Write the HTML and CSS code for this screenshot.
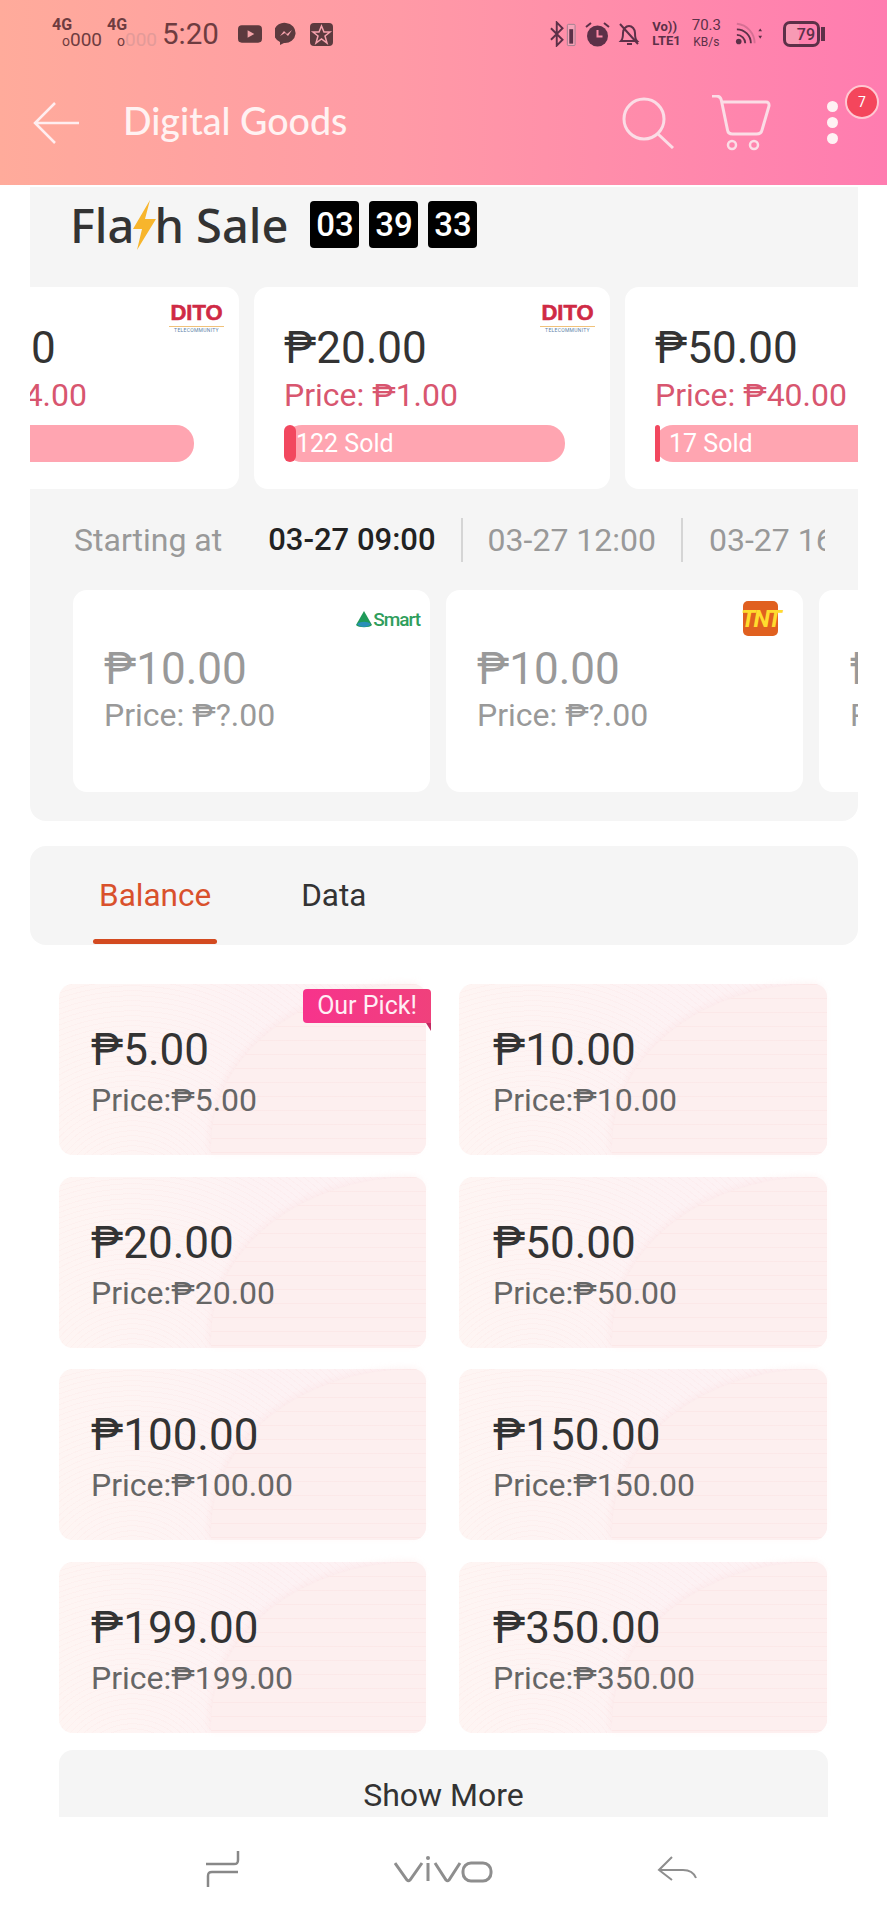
FILE: index.html

```html
<!DOCTYPE html>
<html lang="en">
<head>
    <meta charset="UTF-8">
    <meta name="viewport" content="width=device-width, initial-scale=1.0">
    <title>Digital Goods</title>
    <link rel="stylesheet" href="styles.css">
</head>
<body>
    <header class="header">
        <div class="status">
            <div class="status-side">
                <span class="sim"><b>4G</b><i><u>o</u>000</i></span>
                <span class="sim"><b>4G</b><i class="faint"><u>o</u>000</i></span>
                <span class="clock">5:20</span>
                <svg class="st-icon" width="24" height="18" viewBox="0 0 25 18"><rect width="25" height="18" rx="4" fill="#5c3a3e"/><path d="M10 5l7 4-7 4z" fill="#f3a3a8"/></svg>
                <svg class="st-icon" width="22" height="24" viewBox="0 0 22 24"><path d="M11 1a10.500 10 0 0 0-6 19v3l4-2a10.500 10 0 1 0 2-20z" fill="#5c3a3e"/><path d="M5 14l4-5 3 3 5-4-4 6-3-3z" fill="#f7a3ae"/></svg>
                <svg class="st-icon" width="23" height="23" viewBox="0 0 23 23"><rect width="23" height="23" rx="4" fill="#5c3a3e"/><path d="M11.500 3l2.500 6h6l-5 4 2 7-5.500-4-5.500 4 2-7-5-4h6z" fill="none" stroke="#f7a3ae" stroke-width="1.500"/></svg>
            </div>
            <div class="status-side">
                <svg class="st-icon tight" width="27" height="26" viewBox="0 0 28 26"><path d="M1 7l12 12-6 6V1l6 6L1 19" fill="none" stroke="#5c3048" stroke-width="2"/><rect x="18" y="3" width="8" height="22" rx="1" fill="#f7a3b8" stroke="#a08090"/><rect x="20" y="8" width="4" height="15" fill="#5c3048"/></svg>
                <svg class="st-icon tight" width="25" height="25" viewBox="0 0 25 25"><circle cx="12.500" cy="14" r="10.500" fill="#5c3048"/><path d="M12.500 8v6.500h5" fill="none" stroke="#ff8aa8" stroke-width="2"/><path d="M1 5l5-4M24 5l-5-4" stroke="#5c3048" stroke-width="2"/></svg>
                <svg class="st-icon bell" width="22" height="25" viewBox="0 0 22 25"><path d="M3 19c2-2 2-5 2-8 0-4 3-7 6-7s6 3 6 7c0 3 0 6 2 8zM9 22h5M2 2l18 20" fill="none" stroke="#5c3048" stroke-width="2"/></svg>
                <span class="volte"><b>Vo))</b><b>LTE1</b></span>
                <span class="speed"><span>70.3</span><small>KB/s</small></span>
                <svg class="st-icon wifi" width="28" height="24" viewBox="0 0 30 24"><g fill="none" stroke="#5c3048" stroke-width="2"><path d="M2 13a9 9 0 0 1 9 9" /><path d="M2 7a15 15 0 0 1 15 15" /><path d="M2 1a21 21 0 0 1 19 21" opacity=".25"/></g><circle cx="4" cy="20" r="3" fill="#5c3048"/><path d="M25 9l2-3 2 3zM25 14l2 3 2-3z" fill="#5c3048"/></svg>
                <span class="battery"><span class="battery-num">79</span></span>
            </div>
        </div>
        <div class="appbar">
            <svg class="back" width="48" height="42" viewBox="0 0 48 42"><path d="M46 21H2M22 1L2 21l20 20" fill="none" stroke="#ffeef0" stroke-width="2.500"/></svg>
            <h1 class="appbar-title">Digital Goods</h1>
            <svg class="search" width="52" height="52" viewBox="0 0 52 52"><circle cx="22" cy="22" r="20" fill="none" stroke="#fbdde6" stroke-width="3"/><path d="M36 37l15 14" stroke="#fbdde6" stroke-width="3"/></svg>
            <svg class="cart" width="60" height="56" viewBox="0 0 60 56"><path d="M1 1h4c3 0 5 2 5.500 5l6 29c.5 3 2 4 5 4h24c3 0 5-1.500 5.500-4L58 11c.3-3-1-4-3-4H10" fill="none" stroke="#fbdde6" stroke-width="3"/><circle cx="21" cy="50" r="4" fill="none" stroke="#fbdde6" stroke-width="2.500"/><circle cx="43" cy="50" r="4" fill="none" stroke="#fbdde6" stroke-width="2.500"/></svg>
            <div class="more">
                <i></i><i></i><i></i>
                <span class="badge">7</span>
            </div>
        </div>
    </header>

    <main class="page">
        <section class="flash">
            <div class="flash-head">
                <h2 class="flash-title">Fla<svg class="bolt" width="26" height="52" viewBox="0 0 26 52"><path d="M19 1L2 30h9L6 51l19-31H14z" fill="#f7b52c"/></svg>h Sale</h2>
                <span class="tick">03</span>
                <span class="tick">39</span>
                <span class="tick">33</span>
            </div>

            <div class="deals">
                <div class="deal">
                    <span class="logo-dito"><b>DITO</b><small>TELECOMMUNITY</small></span>
                    <div class="amount">₱10.00</div>
                    <div class="price-red">Price: ₱4.00</div>
                    <div class="bar"></div>
                </div>
                <div class="deal">
                    <span class="logo-dito"><b>DITO</b><small>TELECOMMUNITY</small></span>
                    <div class="amount">₱20.00</div>
                    <div class="price-red">Price: ₱1.00</div>
                    <div class="bar"><span class="bar-fill"></span>122 Sold</div>
                </div>
                <div class="deal">
                    <div class="amount">₱50.00</div>
                    <div class="price-red">Price: ₱40.00</div>
                    <div class="bar"><span class="bar-fill thin"></span>17 Sold</div>
                </div>
            </div>

            <div class="upcoming">
                <div class="times">
                    <span class="times-label">Starting at</span>
                    <span class="time active">03-27 09:00</span>
                    <span class="time">03-27 12:00</span>
                    <span class="time">03-27 16:00</span>
                </div>
                <div class="soon">
                    <div class="soon-card">
                        <span class="logo-smart"><svg width="16" height="17" viewBox="0 0 16 17"><path d="M8 0l8 14c-2 3-14 3-16 0z" fill="#1f9a58"/><path d="M1 13c4-3 10-3 14 0-3 4-11 4-14 0z" fill="#2a8fb8"/></svg>Smart</span>
                        <div class="amount grey">₱10.00</div>
                        <div class="price-grey">Price: ₱?.00</div>
                    </div>
                    <div class="soon-card">
                        <span class="logo-tnt">TNT</span>
                        <div class="amount grey">₱10.00</div>
                        <div class="price-grey">Price: ₱?.00</div>
                    </div>
                    <div class="soon-card">
                        <div class="amount grey">₱10.00</div>
                        <div class="price-grey">Price: ₱?.00</div>
                    </div>
                </div>
            </div>
        </section>

        <nav class="tabs">
            <span class="tab active">Balance</span>
            <span class="tab">Data</span>
        </nav>

        <section class="grid">
            <div class="load">
                <span class="pick">Our Pick!</span>
                <div class="amount">₱5.00</div>
                <div class="price">Price:₱5.00</div>
            </div>
            <div class="load">
                <div class="amount">₱10.00</div>
                <div class="price">Price:₱10.00</div>
            </div>
            <div class="load">
                <div class="amount">₱20.00</div>
                <div class="price">Price:₱20.00</div>
            </div>
            <div class="load">
                <div class="amount">₱50.00</div>
                <div class="price">Price:₱50.00</div>
            </div>
            <div class="load">
                <div class="amount">₱100.00</div>
                <div class="price">Price:₱100.00</div>
            </div>
            <div class="load">
                <div class="amount">₱150.00</div>
                <div class="price">Price:₱150.00</div>
            </div>
            <div class="load">
                <div class="amount">₱199.00</div>
                <div class="price">Price:₱199.00</div>
            </div>
            <div class="load">
                <div class="amount">₱350.00</div>
                <div class="price">Price:₱350.00</div>
            </div>
        </section>

        <div class="show-more">Show More</div>
    </main>

    <footer class="navbar">
        <svg class="nav-recent" width="34" height="38" viewBox="0 0 34 38"><path d="M32 1v9c0 3-1 4-4 4H0M32 22H6c-3 0-4 1-4 4v11" fill="none" stroke="#888" stroke-width="2.500"/></svg>
        <svg class="nav-home" width="100" height="27" viewBox="0 0 100 27"><path d="M1 7l12 17q1.500 1.500 3 0L28 7M34 7v18M41 7l11 17q1.500 1.500 3 0L66 7" fill="none" stroke="#8e8e8e" stroke-width="3"/><circle cx="34" cy="2" r="2" fill="#8e8e8e"/><rect x="69" y="7" width="28" height="18" rx="8" fill="none" stroke="#8e8e8e" stroke-width="3"/></svg>
        <svg class="nav-back" width="40" height="26" viewBox="0 0 40 26"><path d="M15 1L2 14l13 10M2 14h24c7 0 11 3 13 8" fill="none" stroke="#8e8e8e" stroke-width="2"/></svg>
    </footer>
</body>
</html>
```

FILE: styles.css

```css
body {
    margin: 0;
    width: 887px;
    height: 1920px;
    overflow: hidden;
    background-color: #fff;
    font-family: Roboto, 'Noto Sans', sans-serif;
    color: #333;
}

/* top bar */
.header {
    height: 185px;
    background: linear-gradient(90deg, #ffab9b 0%, #ff9aa6 45%, #ff7cb0 100%);
    box-sizing: border-box;
}
.status {
    height: 68px;
    display: flex;
    justify-content: space-between;
    align-items: center;
    padding: 0 67px 0 52px;
}
.status-side {
    display: flex;
    align-items: center;
}
.sim {
    display: flex;
    flex-direction: column;
    width: 55px;
    color: #6e3c40;
}
.sim b {
    font-size: 16px;
    line-height: 13px;
}
.sim i {
    font-style: normal;
    font-size: 19px;
    line-height: 17px;
    margin-left: 10px;
}
.sim i.faint {
    color: #e39a98;
}
.sim u {
    text-decoration: none;
    color: #6e3c40;
    font-size: 14px;
}
.clock {
    font-size: 29.500px;
    color: #6e3c40;
    margin-right: 19px;
}
.st-icon {
    margin-right: 13px;
}
.st-icon.tight {
    margin-right: 8px;
}
.st-icon.bell {
    margin-right: 12px;
}
.st-icon.wifi {
    margin-right: 20px;
}
.volte {
    display: flex;
    flex-direction: column;
    font-size: 13px;
    line-height: 14px;
    color: #5c3048;
    margin-right: 11px;
}
.speed {
    display: flex;
    flex-direction: column;
    align-items: center;
    font-size: 15px;
    line-height: 17px;
    color: #5c3048;
    margin-right: 14px;
}
.speed small {
    font-size: 12px;
}
.battery {
    width: 31px;
    height: 20px;
    border: 3px solid #5c3048;
    border-radius: 7px;
    display: flex;
    justify-content: flex-end;
    align-items: center;
    background: linear-gradient(90deg, #f79ab4 0 13px, transparent 13px);
    position: relative;
}
.battery::after {
    content: "";
    position: absolute;
    right: -8px;
    top: 3px;
    width: 4px;
    height: 14px;
    background-color: #5c3048;
}
.battery-num {
    font-size: 16px;
    font-weight: 500;
    color: #5c3048;
    padding-right: 2px;
}
.appbar {
    height: 117px;
    display: flex;
    align-items: center;
    padding: 0 0 8px 33px;
    box-sizing: border-box;
}
.back {
    flex: none;
}
.appbar-title {
    margin: 0 0 4px 42px;
    width: 499px;
    font-size: 37.600px;
    font-weight: 500;
    font-family: Lato, sans-serif;
    color: #fff2f2;
}
.search {
    flex: none;
}
.cart {
    flex: none;
    margin-left: 37px;
}
.more {
    display: flex;
    flex-direction: column;
    gap: 5px;
    margin-left: 56px;
    position: relative;
}
.more i {
    width: 11px;
    height: 11px;
    border-radius: 50%;
    background-color: #fff2f4;
}
.badge {
    position: absolute;
    left: 18px;
    top: -16px;
    width: 30px;
    height: 30px;
    border: 2px solid #ffc7d2;
    border-radius: 50%;
    background-color: #f4465c;
    color: #fff;
    font-size: 14px;
    text-align: center;
    line-height: 30px;
}

/* flash sale */
.page {
    height: 1632px;
    overflow: hidden;
}
.flash {
    margin: 2px 29px 0 30px;
    height: 634px;
    background-color: #f5f5f5;
    border-radius: 0 0 16px 16px;
    overflow: hidden;
}
.flash-head {
    height: 100px;
    display: flex;
    align-items: flex-start;
    padding: 14px 0 0 40px;
    box-sizing: border-box;
}
.flash-title {
    margin: -2px 22px 0 0;
    font-size: 47px;
    line-height: 48px;
    font-weight: 500;
    font-family: 'Noto Sans', sans-serif;
    color: #333;
    display: flex;
    align-items: center;
}
.bolt {
    margin: 0 -3px;
}
.tick {
    width: 49px;
    height: 47px;
    margin-right: 10px;
    border-radius: 4px;
    background-color: #000;
    color: #fff;
    font-size: 33px;
    font-weight: 500;
    line-height: 47px;
    text-align: center;
}
.deals {
    display: flex;
    gap: 15px;
    margin-left: -147px;
    height: 202px;
}
.deal {
    flex: none;
    width: 356px;
    background-color: #fff;
    border-radius: 14px;
    padding: 0 0 0 30px;
    box-sizing: border-box;
    position: relative;
}
.logo-dito {
    position: absolute;
    right: 15px;
    top: 15px;
    width: 55px;
    text-align: center;
    line-height: 1;
}
.logo-dito b {
    display: block;
    font-size: 22px;
    font-weight: 700;
    -webkit-text-stroke: .6px #cf2a45;
    color: #cf2a45;
    border-bottom: 1px solid #f0c27a;
    padding-bottom: 2px;
    font-family: 'Liberation Sans', sans-serif;
}
.logo-dito small {
    display: block;
    font-size: 5px;
    letter-spacing: .3px;
    color: #5b7fa8;
    margin-top: 1px;
}
.amount {
    font-size: 44px;
    line-height: 50px;
    color: #333;
}
.deal .amount {
    padding-top: 36px;
}
.price-red {
    margin-top: 4px;
    font-size: 32px;
    line-height: 36px;
    color: #d8566f;
}
.bar {
    margin-top: 12px;
    width: 281px;
    height: 37px;
    border-radius: 18px;
    background-color: #ffa5b1;
    color: #fff;
    font-size: 25px;
    line-height: 37px;
    display: flex;
}
.deal:last-child .bar {
    width: 400px;
}
.bar-fill {
    flex: none;
    width: 12px;
    border-radius: 6px;
    background-color: #f2485f;
}
.bar-fill.thin {
    width: 5px;
    margin-right: 9px;
}

/* upcoming */
.times {
    height: 101px;
    display: flex;
    align-items: center;
    margin: 0 33px 0 44px;
    overflow: hidden;
    white-space: nowrap;
    font-size: 32px;
}
.times-label {
    color: #999;
    margin-right: 46px;
}
.time {
    flex: none;
    color: #999;
    padding-right: 25px;
    margin-right: 26px;
    height: 44px;
    line-height: 44px;
    border-right: 2px solid #d5d5d5;
}
.time:last-child {
    border-right: none;
}
.time.active {
    color: #222;
    font-weight: 500;
    font-size: 31px;
    margin-right: 25px;
}
.soon {
    display: flex;
    gap: 16px;
    margin-left: 43px;
}
.soon-card {
    flex: none;
    width: 357px;
    height: 202px;
    background-color: #fff;
    border-radius: 14px;
    padding: 54px 0 0 31px;
    box-sizing: border-box;
    position: relative;
}
.amount.grey {
    color: #999;
}
.price-grey {
    margin-top: 3px;
    font-size: 32px;
    line-height: 36px;
    color: #999;
}
.logo-smart {
    position: absolute;
    right: 10px;
    top: 18px;
    display: flex;
    align-items: center;
    gap: 1px;
    font-size: 19px;
    font-weight: 500;
    letter-spacing: -1px;
    color: #2f9e5c;
}
.logo-tnt {
    position: absolute;
    right: 25px;
    top: 11px;
    width: 35px;
    height: 35px;
    border-radius: 5px;
    background-color: #e0601f;
    color: #ffdc2e;
    font-size: 24px;
    font-weight: 700;
    font-style: italic;
    display: flex;
    justify-content: center;
    align-items: center;
    letter-spacing: -2px;
}

/* tabs */
.tabs {
    margin: 25px 29px 0 30px;
    height: 99px;
    background-color: #f5f5f5;
    border-radius: 16px;
    display: flex;
    gap: 90px;
    padding-left: 69px;
    box-sizing: border-box;
}
.tab {
    position: relative;
    padding-top: 30px;
    font-size: 31.500px;
    line-height: 40px;
    color: #333;
}
.tab.active {
    color: #d9512c;
}
.tab.active::after {
    content: "";
    position: absolute;
    left: -6px;
    right: -6px;
    top: 93px;
    height: 5px;
    border-radius: 3px;
    background-color: #d34a20;
}

/* balance grid */
.grid {
    display: grid;
    grid-template-columns: 367px 368px;
    column-gap: 33px;
    row-gap: 21.500px;
    margin: 39px 0 0 59px;
}
.load {
    height: 171px;
    border-radius: 14px;
    padding: 41px 0 0 32px;
    box-sizing: border-box;
    position: relative;
    z-index: 0;
    background-color: #fdf3f3;
    background-image:
        repeating-radial-gradient(circle at 20% 130%, rgba(245, 190, 190, .08) 0 1px, transparent 1px 5px),
        linear-gradient(90deg, #fef5f3, #fdf2f4 60%);
}
.load:nth-child(even) {
    padding-left: 34px;
}
.load::before {
    content: "";
    position: absolute;
    z-index: -1;
    right: 0;
    bottom: 0;
    width: 215px;
    height: 171px;
    border-radius: 215px 14px 14px 0 / 171px 14px 14px 0;
    background-color: #fdefef;
    background-image: repeating-linear-gradient(180deg, rgba(248, 205, 205, .2) 0 1px, transparent 1px 14px);
    box-shadow: -2px -2px 6px rgba(248, 205, 205, .2);
}
.price {
    margin-top: 7px;
    font-size: 32px;
    line-height: 36px;
    color: #666;
}
.pick {
    position: absolute;
    left: 244px;
    top: 5px;
    width: 128px;
    height: 34px;
    border-radius: 4px 4px 0 4px;
    background: linear-gradient(90deg, #f7338c, #f0417c);
    color: #ffeef5;
    font-size: 25px;
    line-height: 34px;
    text-align: center;
}
.pick::after {
    content: "";
    position: absolute;
    right: 0;
    top: 34px;
    border-top: 8px solid #c02a60;
    border-left: 5px solid transparent;
}
.show-more {
    margin: 17px 0 0 59px;
    width: 769px;
    height: 67px;
    background-color: #f5f5f5;
    border-radius: 14px 14px 0 0;
    text-align: center;
    font-size: 32px;
    line-height: 90px;
    color: #333;
    overflow: hidden;
}

/* system nav */
.navbar {
    height: 103px;
    display: flex;
    align-items: flex-start;
    padding: 33px 0 0 206px;
    box-sizing: border-box;
}
.nav-home {
    margin: 6px 0 0 154px;
}
.nav-back {
    margin: 6px 0 0 163px;
}
```
